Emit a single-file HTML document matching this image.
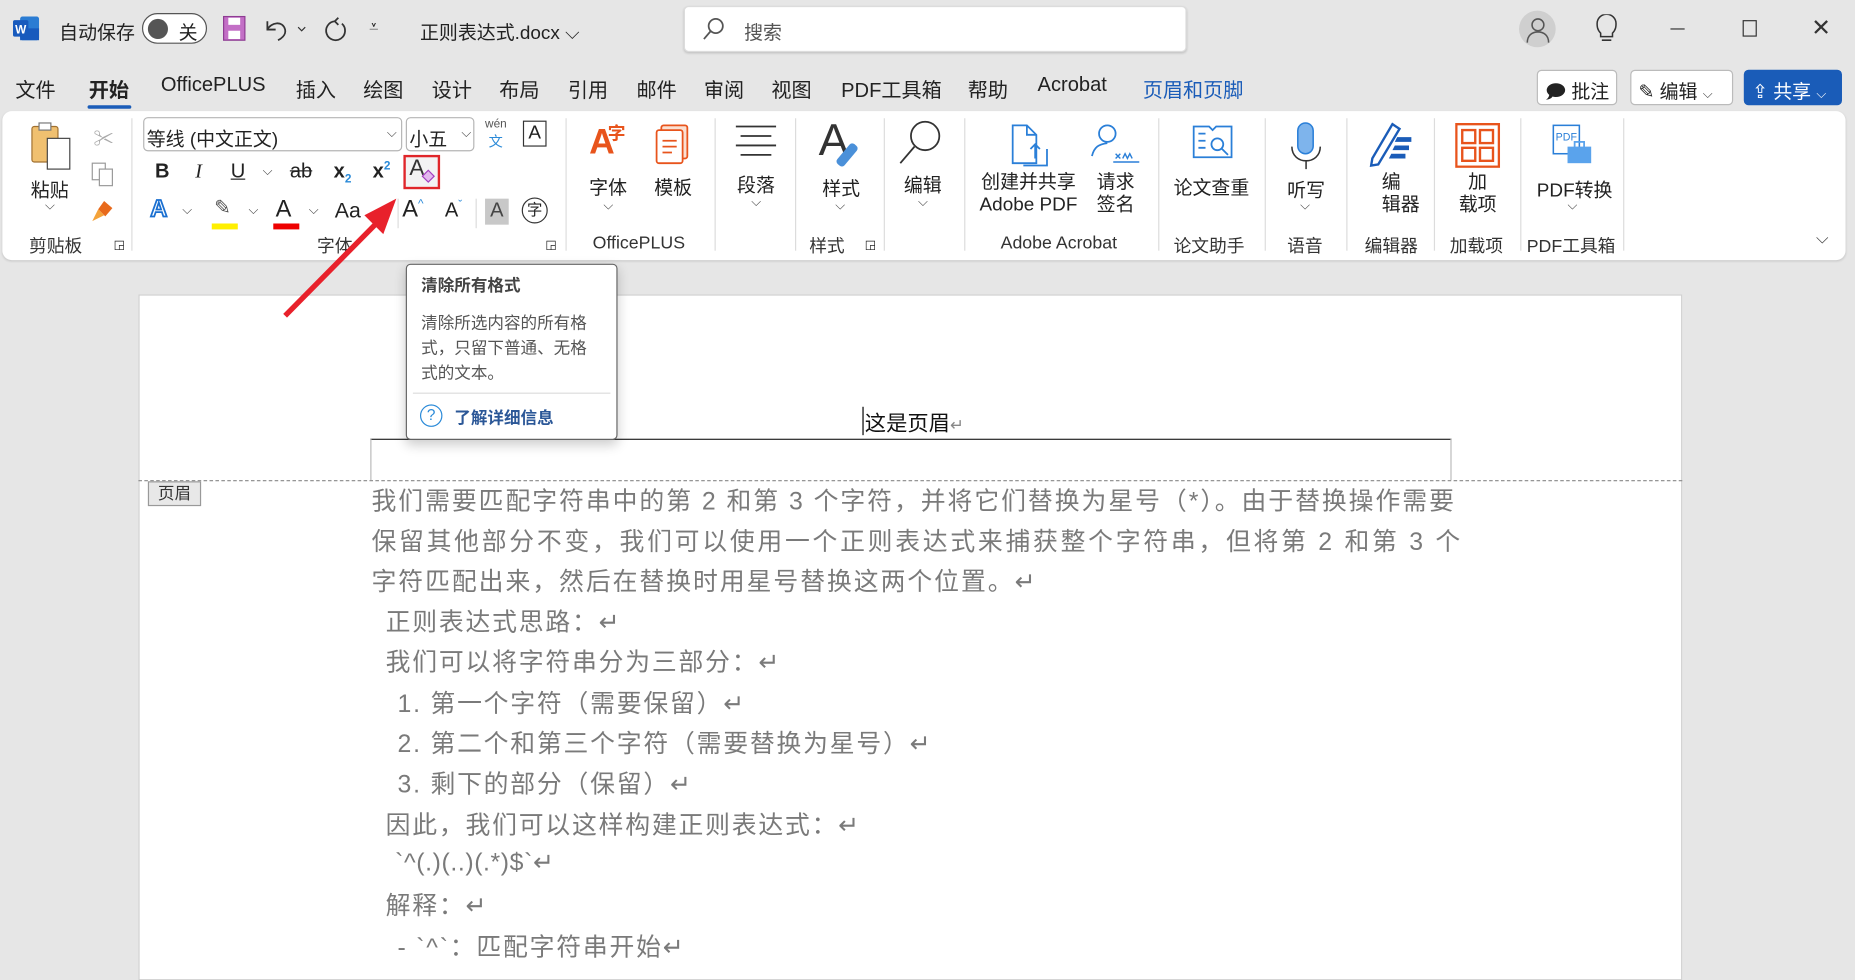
<!DOCTYPE html>
<html><head><meta charset="utf-8"><style>
*{margin:0;padding:0;box-sizing:border-box}
html,body{width:1855px;height:972px;overflow:hidden;background:#e6e6e6}
#s{position:absolute;left:0;top:0;width:1568px;height:822px;transform:scale(1.18304,1.1825);transform-origin:0 0;font-family:"Liberation Sans","Noto Sans CJK SC",sans-serif;color:#222}
.a{position:absolute;white-space:nowrap}
.t{font-size:16px}
.sep{position:absolute;top:100px;width:1px;height:112px;background:#dcdcdc}
.gl{position:absolute;top:197px;font-size:15px;transform:translateX(-50%);white-space:nowrap;color:#333}
.dt{position:absolute;font-size:21px;color:#7a7a7a;white-space:nowrap;letter-spacing:1.5px}
.car{font-size:11px;color:#444}
</style></head><body><div id="s">
<svg class="a" style="left:10px;top:13px" width="24" height="22"><rect x="7" y="1" width="16" height="20" rx="2" fill="#2b7cd3"/><rect x="7" y="11" width="16" height="10" fill="#185abd"/><rect x="1" y="4" width="13" height="14" rx="1.5" fill="#185abd"/><text x="7.5" y="15.5" font-size="10" font-weight="bold" fill="#fff" text-anchor="middle" font-family="Liberation Sans">W</text></svg>
<div class="a t" style="left:50px;top:14px">自动保存</div>
<div class="a" style="left:120px;top:11px;width:55px;height:26px;border:1.5px solid #555;border-radius:13px;background:#fff"></div>
<div class="a" style="left:125px;top:16px;width:17px;height:17px;border-radius:50%;background:#555"></div>
<div class="a t" style="left:151px;top:14px">关</div>
<svg class="a" style="left:188px;top:13px" width="20" height="22"><rect x="1" y="1" width="18" height="20" fill="#c36fc6" stroke="#8e3c93"/><rect x="5" y="2" width="10" height="6" fill="#fff"/><rect x="5" y="13" width="10" height="7" fill="#fff"/></svg>
<svg class="a" style="left:222px;top:12px" width="40" height="24" fill="none" stroke="#333" stroke-width="1.5"><path d="M4 6v7h7M4 13c3-6 13-8 15 0c1 5-4 8-6 9"/><path d="M30 11l3 3 3-3" stroke-width="1"/></svg>
<svg class="a" style="left:270px;top:12px" width="26" height="26" fill="none" stroke="#333" stroke-width="1.5"><path d="M16 3l-3 3 3 3M13 6a8 8 0 1 0 6 2"/></svg>
<div class="a" style="left:312px;top:14px;font-size:14px">⩡</div>
<div class="a t" style="left:355px;top:14px">正则表达式.docx ⌵</div>
<div class="a" style="left:578px;top:5px;width:425px;height:39px;background:#fff;border-radius:4px;border:1px solid #dcdcdc;box-shadow:0 1px 2px rgba(0,0,0,.15)"></div>
<svg class="a" style="left:592px;top:14px" width="22" height="22" fill="none" stroke="#555" stroke-width="1.5"><circle cx="13" cy="8" r="6"/><path d="M9 12l-6 7"/></svg>
<div class="a t" style="left:629px;top:14px;color:#555">搜索</div>
<div class="a" style="left:1284px;top:9px;width:31px;height:31px;border-radius:50%;background:#cfcfcf"></div>
<svg class="a" style="left:1288px;top:12px" width="24" height="26" fill="none" stroke="#555" stroke-width="1.3"><circle cx="12" cy="9" r="5"/><path d="M3 24c0-6 4-9 9-9s9 3 9 9"/></svg>
<svg class="a" style="left:1347px;top:12px" width="22" height="26" fill="none" stroke="#333" stroke-width="1.3"><path d="M6 16c-3-3-3-6-3-8a8 8 0 0 1 16 0c0 2 0 5-3 8v3H6z M7 22h8"/></svg>
<div class="a" style="left:1412px;top:24px;width:12px;height:1.3px;background:#333"></div>
<div class="a" style="left:1473px;top:17px;width:12px;height:14px;border:1.3px solid #333"></div>
<div class="a" style="left:1531px;top:11px;font-size:20px;color:#333">✕</div>
<div class="a" style="top:62px;left:0;font-size:17px;color:#222">
<span class="a" style="left:13px">文件</span><span class="a" style="left:75px;font-weight:bold">开始</span><span class="a" style="left:136px">OfficePLUS</span><span class="a" style="left:250px">插入</span><span class="a" style="left:307px">绘图</span><span class="a" style="left:365px">设计</span><span class="a" style="left:422px">布局</span><span class="a" style="left:480px">引用</span><span class="a" style="left:538px">邮件</span><span class="a" style="left:595px">审阅</span><span class="a" style="left:652px">视图</span><span class="a" style="left:711px">PDF工具箱</span><span class="a" style="left:818px">帮助</span><span class="a" style="left:877px">Acrobat</span><span class="a" style="left:966px;color:#1a5cb8">页眉和页脚</span></div>
<div class="a" style="left:74px;top:89px;width:37px;height:3px;background:#1a5cb8;border-radius:2px"></div>
<div class="a" style="left:1299px;top:59px;width:68px;height:30px;border:1px solid #bbb;border-radius:4px;background:#fff"></div>
<div class="a t" style="left:1306px;top:64px">🗩 批注</div>
<div class="a" style="left:1378px;top:59px;width:87px;height:30px;border:1px solid #bbb;border-radius:4px;background:#fff"></div>
<div class="a t" style="left:1385px;top:64px">✎ 编辑 <span class="car">⌵</span></div>
<div class="a" style="left:1474px;top:59px;width:83px;height:30px;border-radius:4px;background:#1a5cb8"></div>
<div class="a t" style="left:1481px;top:64px;color:#fff">⇪ 共享 <span class="car" style="color:#fff">⌵</span></div>
<div class="a" style="left:2px;top:94px;width:1558px;height:126px;background:#fff;border-radius:8px;box-shadow:0 1px 2px rgba(0,0,0,.12)"></div>
<svg class="a" style="left:24px;top:103px" width="42" height="42"><rect x="3" y="4" width="22" height="30" rx="2" fill="#f0c070" stroke="#a07030"/><rect x="9" y="1" width="10" height="6" fill="#fff" stroke="#777"/><rect x="16" y="14" width="19" height="26" fill="#fff" stroke="#444"/></svg>
<div class="a t" style="left:26px;top:147px">粘贴</div>
<div class="a car" style="left:38px;top:168px">⌵</div>
<div class="a" style="left:79px;top:103px;color:#aaa;font-size:17px">✂</div>
<svg class="a" style="left:77px;top:137px" width="20" height="22" fill="none" stroke="#999"><rect x="1" y="1" width="11" height="14"/><rect x="7" y="6" width="11" height="14" fill="#fff"/></svg>
<svg class="a" style="left:76px;top:168px" width="22" height="22"><path d="M12 2l7 6-6 7-6-6z" fill="#e86a1c"/><path d="M7 9l-5 10 10-5" fill="#f4a33a"/></svg>
<div class="gl" style="left:47px">剪贴板</div>
<div class="a" style="left:96px;top:202px;font-size:10px">◲</div>
<div class="sep" style="left:111px"></div>
<div class="a" style="left:121px;top:99px;width:219px;height:29px;border:1px solid #b5b5b5;border-radius:4px"></div>
<div class="a t" style="left:124px;top:104px">等线 (中文正文)</div>
<div class="a car" style="left:327px;top:107px">⌵</div>
<div class="a" style="left:343px;top:99px;width:58px;height:29px;border:1px solid #b5b5b5;border-radius:4px"></div>
<div class="a t" style="left:346px;top:104px">小五</div>
<div class="a car" style="left:390px;top:107px">⌵</div>
<div class="a" style="left:410px;top:100px;font-size:10px;color:#555">wén</div>
<div class="a" style="left:413px;top:111px;font-size:12px;color:#2a8ad8">文</div>
<div class="a" style="left:442px;top:102px;width:20px;height:22px;border:1.3px solid #333;font-size:16px;text-align:center;line-height:20px">A</div>
<div class="a" style="top:135px;left:0;font-size:17px">
<b class="a" style="left:131px">B</b><i class="a" style="left:165px;font-family:'Liberation Serif'">I</i><u class="a" style="left:195px">U</u><span class="a car" style="left:222px;top:4px">⌵</span><s class="a" style="left:245px">ab</s><span class="a" style="left:282px;font-weight:bold">x<sub style="font-size:10px;color:#2a8ad8">2</sub></span><span class="a" style="left:315px;font-weight:bold">x<sup style="font-size:10px;color:#2a8ad8">2</sup></span></div>
<div class="a" style="left:341px;top:131px;width:31px;height:29px;border:2.5px solid #e0262a;background:#f3f3f3"></div>
<div class="a" style="left:346px;top:132px;font-size:19px;color:#333">A</div>
<div class="a" style="left:358px;top:145px;width:8px;height:8px;border:1.5px solid #a33fbf;transform:rotate(45deg);background:#e3b8ef"></div>
<div class="a" style="top:166px;left:0;font-size:20px">
<span class="a" style="left:127px;color:#fff;-webkit-text-stroke:1.5px #1a6fd0;font-weight:bold">A</span><span class="a car" style="left:154px;top:6px">⌵</span>
<span class="a" style="left:181px;font-size:17px;color:#555">✎</span><span class="a" style="left:179px;top:23px;width:22px;height:5px;background:#ffef00"></span><span class="a car" style="left:210px;top:6px">⌵</span>
<span class="a" style="left:233px">A</span><span class="a" style="left:231px;top:23px;width:22px;height:5px;background:#e00"></span><span class="a car" style="left:261px;top:6px">⌵</span>
<span class="a" style="left:283px;font-size:18px;top:2px">Aa</span>
<span class="a" style="left:340px">A<sup style="font-size:10px;color:#2a8ad8">^</sup></span><span class="a" style="left:376px;font-size:17px;top:2px">A<sup style="font-size:10px;color:#2a8ad8">ˇ</sup></span>
<span class="a" style="left:410px;top:2px;width:20px;height:22px;background:#c8c8c8;font-size:17px;text-align:center;color:#444">A</span>
<span class="a" style="left:441px;top:1px;width:22px;height:22px;border:1.3px solid #333;border-radius:50%;font-size:13px;text-align:center;line-height:20px">字</span></div>
<div class="sep" style="left:336px;top:168px;height:25px"></div><div class="sep" style="left:402px;top:168px;height:25px"></div>
<div class="gl" style="left:283px">字体</div>
<div class="a" style="left:461px;top:202px;font-size:10px">◲</div>
<div class="sep" style="left:478px"></div>
<div class="a" style="left:498px;top:104px;font-size:30px;color:#e8541c;font-weight:bold">A<span style="font-size:15px;position:relative;top:-12px;left:-6px">字</span></div>
<svg class="a" style="left:553px;top:104px" width="32" height="36" fill="none" stroke="#e8541c" stroke-width="1.5"><rect x="6" y="2" width="22" height="28" rx="2" fill="#fbe0d2"/><rect x="2" y="6" width="22" height="28" rx="2" fill="#fff"/><path d="M7 15h12M7 20h12M7 25h8"/></svg>
<div class="a t" style="left:498px;top:145px">字体</div><div class="a t" style="left:553px;top:145px">模板</div>
<div class="a car" style="left:510px;top:168px">⌵</div>
<div class="gl" style="left:540px">OfficePLUS</div>
<div class="sep" style="left:604px"></div>
<svg class="a" style="left:620px;top:104px" width="38" height="30" stroke="#333" stroke-width="1.5"><path d="M2 3h34M6 11h26M2 19h34M6 27h26"/></svg>
<div class="a t" style="left:623px;top:143px">段落</div><div class="a car" style="left:635px;top:165px">⌵</div>
<div class="sep" style="left:672px"></div>
<div class="a" style="left:692px;top:98px;font-size:38px;color:#333;font-weight:300">A</div>
<div class="a" style="left:712px;top:120px;width:8px;height:22px;background:#4a90d9;transform:rotate(40deg);border-radius:3px"></div>
<div class="a t" style="left:695px;top:146px">样式</div><div class="a car" style="left:706px;top:168px">⌵</div>
<div class="gl" style="left:699px">样式</div>
<div class="a" style="left:731px;top:202px;font-size:10px">◲</div>
<div class="sep" style="left:747px"></div>
<svg class="a" style="left:759px;top:100px" width="42" height="40" fill="none" stroke="#333" stroke-width="1.5"><circle cx="23" cy="15" r="12"/><path d="M14 24L2 38"/></svg>
<div class="a t" style="left:764px;top:143px">编辑</div><div class="a car" style="left:776px;top:165px">⌵</div>
<div class="sep" style="left:815px"></div>
<svg class="a" style="left:853px;top:104px" width="40" height="40" fill="none" stroke="#2a7fd8" stroke-width="1.5"><path d="M3 2h12l8 8v24H3z M15 2v8h8"/><path d="M12 36h20V22 M22 18v12 M18 22l4-4 4 4"/></svg>
<svg class="a" style="left:921px;top:104px" width="44" height="36" fill="none" stroke="#2a7fd8" stroke-width="1.5"><circle cx="15" cy="9" r="7"/><path d="M2 28c2-8 6-10 13-11"/><path d="M22 26l4 4M26 26l-4 4M28 30l2-4 2 4 2-4 2 4M20 33h22" stroke-width="1.2"/></svg>
<div class="a t" style="left:828px;top:145px;line-height:19px;text-align:center">创建并共享<br>Adobe PDF</div>
<div class="a t" style="left:927px;top:145px;line-height:19px;text-align:center">请求<br>签名</div>
<div class="gl" style="left:895px">Adobe Acrobat</div>
<div class="sep" style="left:979px"></div>
<svg class="a" style="left:1007px;top:104px" width="36" height="34" fill="none" stroke="#2a7fd8" stroke-width="1.5"><path d="M2 3h13l3 3 3-3h13v26H2z"/><path d="M6 9h6M6 15h6M6 21h6"/><circle cx="22" cy="18" r="5"/><path d="M26 22l5 5"/></svg>
<div class="a t" style="left:992px;top:145px">论文查重</div>
<div class="gl" style="left:1022px">论文助手</div>
<div class="sep" style="left:1069px"></div>
<svg class="a" style="left:1089px;top:102px" width="30" height="42" fill="none" stroke="#333" stroke-width="1.3"><rect x="8" y="2" width="13" height="26" rx="6.5" fill="#7eb4ec" stroke="#2a7fd8"/><path d="M3 22c0 8 6 12 12 12s12-4 12-12M15 34v7"/></svg>
<div class="a t" style="left:1088px;top:147px">听写</div><div class="a car" style="left:1099px;top:168px">⌵</div>
<div class="gl" style="left:1103px">语音</div>
<div class="sep" style="left:1138px"></div>
<svg class="a" style="left:1155px;top:102px" width="42" height="40"><path d="M22 3l6 4-18 30-6 1 1-6z" fill="#fff" stroke="#1a5cb8" stroke-width="2"/><path d="M26 14h12v4H24zM24 21h12v4H22zM21 28h12v4H19z" fill="#1a5cb8"/></svg>
<div class="a t" style="left:1168px;top:145px;line-height:19px">编<br>辑器</div>
<div class="gl" style="left:1176px">编辑器</div>
<div class="sep" style="left:1212px"></div>
<svg class="a" style="left:1230px;top:104px" width="38" height="38" fill="none" stroke="#e8541c" stroke-width="2"><rect x="1" y="1" width="36" height="36"/><rect x="6" y="6" width="11" height="11"/><rect x="21" y="6" width="11" height="11"/><rect x="6" y="21" width="11" height="11"/><rect x="21" y="21" width="11" height="11"/></svg>
<div class="a t" style="left:1233px;top:145px;line-height:19px;text-align:center">加<br>载项</div>
<div class="gl" style="left:1248px">加载项</div>
<div class="sep" style="left:1285px"></div>
<svg class="a" style="left:1311px;top:104px" width="36" height="36"><rect x="2" y="2" width="22" height="24" fill="#fff" stroke="#2a7fd8" stroke-width="1.3"/><text x="4" y="15" font-size="9" fill="#2a7fd8" font-family="Liberation Sans">PDF</text><rect x="14" y="20" width="20" height="14" fill="#5aa3ec"/><rect x="20" y="16" width="8" height="5" fill="none" stroke="#5aa3ec" stroke-width="1.5"/></svg>
<div class="a t" style="left:1299px;top:147px">PDF转换</div><div class="a car" style="left:1325px;top:168px">⌵</div>
<div class="gl" style="left:1328px">PDF工具箱</div>
<div class="sep" style="left:1372px"></div>
<div class="a" style="left:1535px;top:193px;font-size:14px;color:#444">⌵</div>
<div class="a" style="left:117px;top:249px;width:1305px;height:580px;background:#fff;border:1px solid #d0d0d0"></div>
<div class="a" style="left:313px;top:371px;width:914px;height:1px;background:#222"></div>
<div class="a" style="left:313px;top:371px;width:1px;height:35px;background:#bbb"></div>
<div class="a" style="left:1226px;top:371px;width:1px;height:35px;background:#bbb"></div>
<div class="a" style="left:117px;top:406px;width:1305px;border-top:1px dashed #888"></div>
<div class="a" style="left:125px;top:407px;width:45px;height:21px;background:#e8e8e8;border:1px solid #999;font-size:14px;text-align:center;line-height:19px;color:#333">页眉</div>
<div class="a" style="left:729px;top:344px;width:1px;height:24px;background:#000"></div>
<div class="a" style="left:731px;top:344px;font-size:18px;color:#111">这是页眉<span style="color:#888;font-size:14px">↵</span></div>
<div class="dt" style="left:314px;top:408px;letter-spacing:1.65px">我们需要匹配字符串中的第 2 和第 3 个字符，并将它们替换为星号（*）。由于替换操作需要</div>
<div class="dt" style="left:314px;top:442px;letter-spacing:2.3px">保留其他部分不变，我们可以使用一个正则表达式来捕获整个字符串，但将第 2 和第 3 个</div>
<div class="dt" style="left:314px;top:476px;letter-spacing:1.65px">字符匹配出来，然后在替换时用星号替换这两个位置。↵</div>
<div class="dt" style="left:326px;top:510px">正则表达式思路：↵</div>
<div class="dt" style="left:326px;top:544px">我们可以将字符串分为三部分：↵</div>
<div class="dt" style="left:336px;top:579px">1. 第一个字符（需要保留）↵</div>
<div class="dt" style="left:336px;top:613px">2. 第二个和第三个字符（需要替换为星号）↵</div>
<div class="dt" style="left:336px;top:647px">3. 剩下的部分（保留）↵</div>
<div class="dt" style="left:326px;top:682px">因此，我们可以这样构建正则表达式：↵</div>
<div class="dt" style="left:334px;top:717px;letter-spacing:0.5px">`^(.)(..)(.*)$`↵</div>
<div class="dt" style="left:326px;top:750px">解释：↵</div>
<div class="dt" style="left:336px;top:785px">- `^`：匹配字符串开始↵</div>
<div class="a" style="left:343px;top:223px;width:179px;height:149px;background:#fff;border:1px solid #666;border-radius:4px;box-shadow:0 4px 10px rgba(0,0,0,.2)"></div>
<div class="a" style="left:356px;top:231px;font-size:14px;font-weight:bold;color:#444">清除所有格式</div>
<div class="a" style="left:356px;top:263px;font-size:14px;line-height:21px;color:#555">清除所选内容的所有格<br>式，只留下普通、无格<br>式的文本。</div>
<div class="a" style="left:349px;top:332px;width:167px;height:1px;background:#ddd"></div>
<div class="a" style="left:355px;top:342px;width:19px;height:19px;border:1.5px solid #2a8ad8;border-radius:50%;color:#2a8ad8;font-size:13px;text-align:center;line-height:16px">?</div>
<div class="a" style="left:384px;top:343px;font-size:14px;font-weight:bold;color:#2b5797">了解详细信息</div>
<svg class="a" style="left:230px;top:160px" width="120" height="115"><path d="M11 107L92 25" stroke="#e8212b" stroke-width="4.5"/><path d="M105 8L78 22 94 38z" fill="#e8212b"/></svg>
</div></body></html>
